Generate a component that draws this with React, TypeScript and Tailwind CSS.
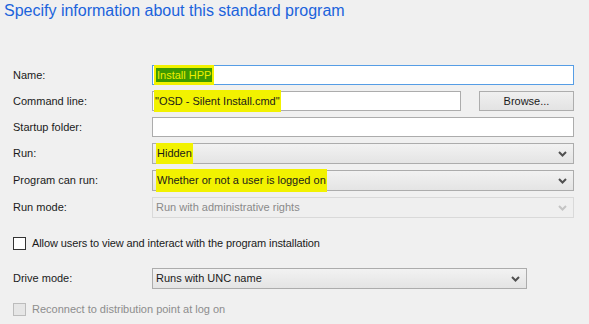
import React from "react";

const Chevron = ({ disabled }: { disabled?: boolean }) => (
  <svg width="9" height="6" viewBox="0 0 9 6" className="shrink-0">
    <path
      d="M1 1 L4.5 4.5 L8 1"
      fill="none"
      stroke={disabled ? "#c4c4c4" : "#505050"}
      strokeWidth="2"
    />
  </svg>
);

const Label = ({ children }: { children: React.ReactNode }) => (
  <div className="w-[139px] shrink-0 text-[11px] text-[#1a1a1a]">{children}</div>
);

const Select = ({
  children,
  disabled,
  width,
}: {
  children: React.ReactNode;
  disabled?: boolean;
  width: string;
}) => (
  <div
    className={`${width} h-[21px] flex items-center justify-between pl-[3px] pr-[6px] border text-[11px] ${
      disabled
        ? "border-[#d9d9d9] bg-[#efefef] text-[#8a8a8a]"
        : "border-[#acacac] bg-gradient-to-b from-[#f2f2f2] to-[#e4e4e4] text-[#1a1a1a]"
    }`}
  >
    <span className="flex items-center">{children}</span>
    <Chevron disabled={disabled} />
  </div>
);

const Mark = ({ children, className }: { children: React.ReactNode; className?: string }) => (
  <span className={`bg-[#f2f200] px-[1px] ${className ?? "py-[2px]"}`}>{children}</span>
);

export default function App() {
  return (
    <div
      className="w-[589px] h-[324px] bg-[#f0f0f0] overflow-hidden"
      style={{ fontFamily: '"Liberation Sans", Arial, sans-serif' }}
    >
      <h1 className="pl-[4px] pt-[1px] text-[16px] leading-[20px] text-[#1b63dc]">
        Specify information about this standard program
      </h1>

      <div className="pl-[13px] pr-[15px] mt-[44px] flex flex-col">
        <div className="flex items-center h-[20px]">
          <Label>Name:</Label>
          <div className="flex-1 h-[20px] border border-[#569de5] bg-white flex items-center pl-[1px] text-[11px]">
            <Mark className="py-[2px] px-[2px]">
              <span className="bg-[#3d9a00] text-[#eeee00] px-[1px] py-[1px]">Install HPP</span>
            </Mark>
          </div>
        </div>

        <div className="flex items-center h-[20px] mt-[6px]">
          <Label>Command line:</Label>
          <div className="w-[309px] h-[20px] border border-[#acacac] bg-white flex items-center pl-[1px] text-[11px] text-[#1a1a1a]">
            <Mark className="py-[3px]">"OSD - Silent Install.cmd"</Mark>
          </div>
          <div className="ml-[18px] flex-1 h-[20px] border border-[#adadad] bg-gradient-to-b from-[#f0f0f0] to-[#e3e3e3] flex items-center justify-center text-[11px] text-[#1a1a1a]">
            Browse...
          </div>
        </div>

        <div className="flex items-center h-[20px] mt-[6px]">
          <Label>Startup folder:</Label>
          <div className="flex-1 h-[20px] border border-[#acacac] bg-white" />
        </div>

        <div className="flex items-center h-[21px] mt-[6px]">
          <Label>Run:</Label>
          <Select width="flex-1">
            <Mark>Hidden</Mark>
          </Select>
        </div>

        <div className="flex items-center h-[21px] mt-[6px]">
          <Label>Program can run:</Label>
          <Select width="flex-1">
            <Mark className="py-[3px]">Whether or not a user is logged on</Mark>
          </Select>
        </div>

        <div className="flex items-center h-[21px] mt-[6px]">
          <Label>Run mode:</Label>
          <Select width="flex-1" disabled>
            Run with administrative rights
          </Select>
        </div>

        <div className="flex items-center mt-[19px] h-[13px]">
          <div className="w-[13px] h-[13px] border border-[#333333] bg-white shrink-0" />
          <span className="ml-[6px] text-[11px] tracking-[-0.1px] text-[#1a1a1a]">
            Allow users to view and interact with the program installation
          </span>
        </div>

        <div className="flex items-center h-[21px] mt-[18px]">
          <Label>Drive mode:</Label>
          <Select width="w-[375px]">Runs with UNC name</Select>
        </div>

        <div className="flex items-center mt-[14px] h-[13px]">
          <div className="w-[13px] h-[13px] border border-[#bcbcbc] bg-[#e6e6e6] shrink-0" />
          <span className="ml-[6px] text-[11px] text-[#8d8d8d]">
            Reconnect to distribution point at log on
          </span>
        </div>
      </div>
    </div>
  );
}
